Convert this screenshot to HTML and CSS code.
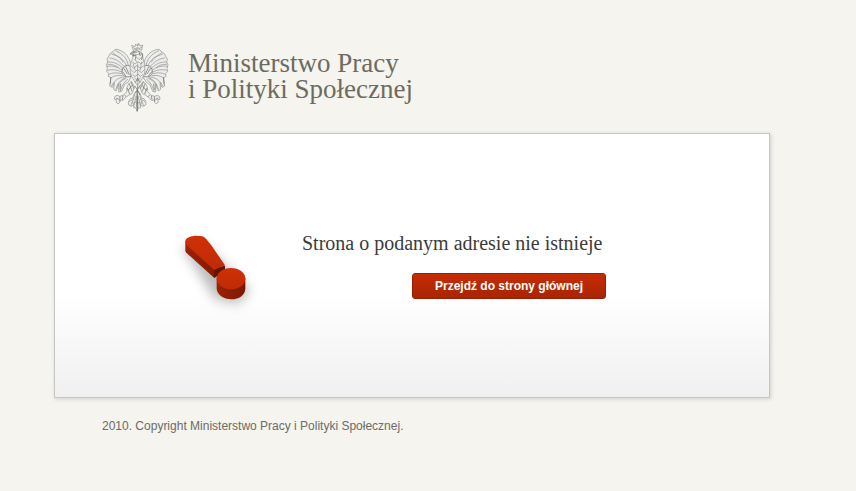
FILE: index.html
```html
<!DOCTYPE html>
<html lang="pl">
<head>
  <meta charset="UTF-8">
  <meta name="viewport" content="width=device-width, initial-scale=1.0">
  <title>Ministerstwo Pracy i Polityki Społecznej</title>
  <link rel="stylesheet" href="styles.css">
</head>
<body>
  <div class="page">
    <header class="header">
      <svg class="emblem" viewBox="0 0 240 240" aria-hidden="true">
        <defs>
          <g id="wing">
            <path class="fill" d="M98 92C99 70 84 46 57 40L50 41 44 48 36 53 32 61 27 69 29 78 25 86 28 97 26 106 32 113 31 121 39 125 35 150 43 154 49 140 47 160 54 165 63 145 62 168 71 166 80 145 90 139 98 126Z"/>
            <path d="M91 88C87 69 76 54 52 44M86 90C77 70 63 60 40 54M80 94C67 77 53 68 34 66M76 98C62 84 48 77 29 78M74 103C59 93 44 88 27 91M72 108C56 101 42 99 28 103M71 113C56 109 44 110 33 115M74 119C60 117 48 119 38 126M79 123C62 124 50 133 40 150M84 127C68 134 60 144 53 160M90 129C80 136 72 148 67 165"/>
            <path d="M57 151C61 137 73 129 84 124M44 49C51 59 68 62 75 79M28 85C41 84 52 88 61 95"/>
            <path class="dark" d="M97 91C85 84 72 92 72 107S88 126 101 120M77 96L88 114M83 92L94 117M74 107L84 121M68 143L66 162M38 124L37 144"/>
            <path class="fill" d="M100 136C88 145 84 158 87 167L75 178 65 181 57 178 50 182 49 190 56 191 54 198 60 204 66 198 66 192 75 193 83 184 93 177 102 173 110 152Z"/>
            <path class="dark" d="M94 143L102 166M99 138L108 158M88 156L95 174M75 179L73 191M66 181L65 196M54 186L63 190M80 177L84 182M102 148L90 164"/>
            <path class="fill" d="M114 166C104 176 109 187 97 188L91 198 92 207 100 211 108 206 107 215 114 216 118 226 119 166Z"/>
            <path d="M111 173L104 196 98 209M115 179L108 208M117 180L115 215M94 198C99 189 106 195 104 203M107 206C106 198 114 194 116 204M100 188L109 191"/>
          </g>
        </defs>
        <g class="lines">
          <use href="#wing"/>
          <use href="#wing" transform="matrix(-1 0 0 1 235 0)"/>
          <path class="fill" d="M107 57C103 72 94 84 97 99C94 111 104 129 118 148C134 130 143 112 140 98C143 80 132 70 134 53Z"/>
          <path d="M103 77L111 84 120 77 129 84 137 77M99 89L107 97 117 88 127 97 139 88M99 101L108 110 119 101 130 110 139 101M103 114L111 122 120 114 128 122 135 114M109 125L119 135 128 125M114 62L123 71 132 63M109 70L119 79M105 82L112 104M131 77L126 104M119 83V150"/>
          <path class="dark" d="M96 54L104 47 117 44 130 49 134 60 130 72M96 54L108 55 103 60 114 58 112 71M100 52L112 50M103 48L118 49M122 45L127 60M112 140L119 126 126 140M119 150L118 225M111 150L126 176M126 148L112 171"/>
          <path class="fill" d="M106 43L101 28 111 32 113 24 119 30 122 22 126 30 134 27 131 43C125 38 113 38 106 43Z"/>
          <path d="M106 35L116 40 118 33 123 38 132 33M119 23V29"/>
        </g>
      </svg>
      <h1 class="title">Ministerstwo Pracy<br>i Polityki Społecznej</h1>
    </header>

    <main class="panel">
      <svg class="mark" viewBox="0 0 270 270" aria-hidden="true">
        <defs>
          <filter id="soft" x="-50%" y="-50%" width="200%" height="200%">
            <feGaussianBlur stdDeviation="17"/>
          </filter>
          <linearGradient id="top" x1="0" y1="0" x2="0" y2="1">
            <stop offset="0" stop-color="#d03008"/>
            <stop offset="1" stop-color="#bf2b06"/>
          </linearGradient>
          <linearGradient id="side" x1="0" y1="0" x2="1" y2="0">
            <stop offset="0" stop-color="#9c2104"/>
            <stop offset="1" stop-color="#7b1902"/>
          </linearGradient>
        </defs>
        <path d="M36 66L100 165 135 222 205 236 240 194 170 126 98 55Z" fill="#777" opacity=".5" filter="url(#soft)"/>
        <path d="M46 48V78C48 84 54 88 60 93L133 159 165 138V122L132 130Z" fill="url(#side)"/>
        <path d="M132 132L165 122V134L145 149 133 159Z" fill="#641402"/>
        <path d="M46 48C48 36 72 29 97 34C108 38 114 50 124 61L165 121C155 125 144 129 133 135L56 66C49 59 45 55 46 48Z" fill="url(#top)"/>
        <path d="M140 158V192C142 209 160 223 184 223S224 210 226 192V158Z" fill="url(#side)"/>
        <ellipse cx="183" cy="161" rx="43" ry="32" fill="url(#top)"/>
      </svg>
      <div class="message">
        <h2 class="message-title">Strona o podanym adresie nie istnieje</h2>
        <a class="button" href="/">Przejdź do strony głównej</a>
      </div>
    </main>

    <footer class="footer">2010. Copyright Ministerstwo Pracy i Polityki Społecznej.</footer>
  </div>
</body>
</html>
```

FILE: styles.css
```css
body {
  margin: 0;
  background: #f5f4ef;
  font-family: "Liberation Sans", Arial, sans-serif;
}
.page {
  max-width: 716px;
  padding: 36px 86px 36px 54px;
}
.header {
  display: flex;
  align-items: center;
  gap: 10px;
  padding: 0 44px 17px;
}
.emblem {
  width: 80px;
  height: 80px;
}
.lines {
  fill: none;
  stroke: #8e8e8c;
  stroke-width: 2;
  stroke-linejoin: round;
}
.fill {
  fill: #ededeb;
}
.dark {
  stroke: #666;
}
.title {
  margin: 0;
  color: #6c6b60;
  font-family: "Liberation Serif", "Times New Roman", serif;
  font-size: 27px;
  font-weight: normal;
  line-height: 26px;
}
.panel {
  display: flex;
  align-items: flex-start;
  gap: 42px;
  padding: 91px 115px 82px;
  border: 1px solid #c6c6c5;
  background: linear-gradient(#fff 60%, #f0f0f0);
  box-shadow: 1px 1px 4px #d0cfca;
}
.mark {
  flex: none;
  width: 90px;
  height: 90px;
}
.message {
  display: flex;
  flex-direction: column;
  align-items: flex-end;
  width: 304px;
  padding-top: 6px;
}
.message-title {
  align-self: flex-start;
  margin: 0 0 18px;
  color: #3b3b3b;
  font-family: Georgia, "Liberation Serif", serif;
  font-size: 20px;
  font-weight: normal;
  line-height: 24px;
  white-space: nowrap;
}
.button {
  padding: 0 22px;
  border: 1px solid #962000;
  border-radius: 3px;
  background: linear-gradient(#c42c05, #aa2403);
  color: #fff;
  font-size: 12px;
  font-weight: bold;
  line-height: 24px;
  text-decoration: none;
}
.footer {
  padding: 20px 48px;
  color: #6c6b65;
  font-size: 12px;
  line-height: 16px;
}
```
